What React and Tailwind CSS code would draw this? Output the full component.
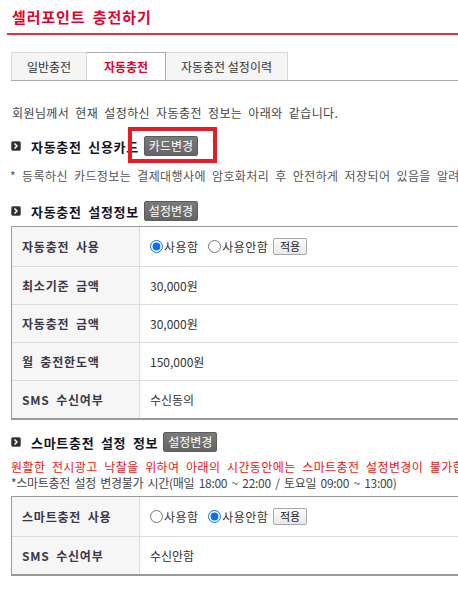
import React from "react";

function Bullet() {
  return (
    <svg width="10" height="10" viewBox="0 0 10 10" className="shrink-0">
      <rect x="0.5" y="0.5" width="9" height="9" rx="1.5" fill="#2e2e2e" stroke="#6a6a6a" />
      <polyline points="3.5,2.5 6,5 3.5,7.5" fill="none" stroke="#fff" strokeWidth="1.5" />
    </svg>
  );
}

function GrayBtn({ children }) {
  return (
    <div className="ml-[5px] h-[20px] w-[54px] flex items-center justify-center rounded-[2px] border border-[#5c5c5c] bg-[linear-gradient(#7a7a7a,#656565)] text-white text-[12px] leading-none">
      {children}
    </div>
  );
}

function Heading({ title, btn }) {
  return (
    <div className="flex items-center h-[20px] pl-[11px]">
      <Bullet />
      <span className="ml-[10px] text-[13px] font-bold text-[#15151f] leading-none tracking-[0.7px] [word-spacing:3px]">
        {title}
      </span>
      <GrayBtn>{btn}</GrayBtn>
    </div>
  );
}

function Radio({ checked, label }) {
  return (
    <label className="flex items-center">
      <input
        type="radio"
        checked={checked}
        readOnly
        className="w-[13px] h-[13px] m-0 accent-[#0a6ff0]"
      />
      <span className="ml-px text-[12px] text-[#333] tracking-[0.4px]">{label}</span>
    </label>
  );
}

function ApplyBtn() {
  return (
    <div className="ml-[5px] h-[17px] w-[34px] flex items-center justify-center rounded-[2px] border border-[#a8a8a8] bg-[linear-gradient(#fdfdfd,#e8e8e8)] text-[11px] text-[#222] leading-none">
      적용
    </div>
  );
}

function Row({ label, children, h, last }) {
  return (
    <div className={`flex ${last ? "" : "border-b border-[#dcdcdc]"}`} style={{ height: h }}>
      <div className="w-[128px] shrink-0 bg-[#f6f6f6] border-r border-[#dcdcdc] flex items-center pl-[10px] text-[12px] font-bold text-[#383848] tracking-[0.8px] [word-spacing:3px]">
        {label}
      </div>
      <div className="flex items-center pl-[10px] text-[12px] text-[#333]">{children}</div>
    </div>
  );
}

function UseRow({ on }) {
  return (
    <div className="flex items-center">
      <Radio checked={on} label="사용함" />
      <div className="w-[10px]" />
      <Radio checked={!on} label="사용안함" />
      <ApplyBtn />
    </div>
  );
}

export default function App() {
  return (
    <div className="relative w-[458px] h-[590px] overflow-hidden bg-white font-['Noto_Sans_CJK_KR',sans-serif] text-[#333]">
      <div className="h-[33px] pl-[12px] pt-[6px] text-[15px] font-bold text-[#e4002b] leading-[22px] tracking-[0.9px] [word-spacing:3px]">
        셀러포인트 충전하기
      </div>
      <div className="ml-[7px] h-[2px] bg-[#e3323b]" />

      <div className="mt-[17px] ml-[11px] flex items-end h-[29px] border-b border-[#aaa]">
        <div className="w-[76px] h-[28px] border border-b-0 border-[#d8d8d8] bg-[#f5f5f5] flex items-center justify-center text-[12px] text-[#333]">
          일반충전
        </div>
        <div className="w-[79px] h-[28px] border border-b-0 border-l-0 border-[#aaa] bg-white flex items-center justify-center text-[12px] font-bold text-[#e4002b]">
          자동충전
        </div>
        <div className="w-[122px] h-[28px] border border-b-0 border-l-0 border-[#d8d8d8] bg-[#f5f5f5] flex items-center justify-center text-[12px] text-[#333]">
          자동충전 설정이력
        </div>
      </div>

      <div className="mt-[24px] h-[16px] pl-[12px] text-[12px] leading-[16px] text-[#444] whitespace-nowrap tracking-[0.4px] [word-spacing:3px]">
        회원님께서 현재 설정하신 자동충전 정보는 아래와 같습니다.
      </div>

      <div className="mt-[15px]">
        <Heading title="자동충전 신용카드" btn="카드변경" />
      </div>

      <div className="mt-[12px] h-[16px] pl-[10px] text-[12px] leading-[16px] text-[#555] whitespace-nowrap tracking-[0.4px] [word-spacing:3px]">
        * 등록하신 카드정보는 결제대행사에 암호화처리 후 안전하게 저장되어 있음을 알려드립니다.
      </div>

      <div className="mt-[17px]">
        <Heading title="자동충전 설정정보" btn="설정변경" />
      </div>

      <div className="mt-[5px] ml-[11px] w-[480px] border-t border-l border-b-2 border-[#9a9a9a]">
        <Row label="자동충전 사용" h={40}>
          <UseRow on={true} />
        </Row>
        <Row label="최소기준 금액" h={38}>30,000원</Row>
        <Row label="자동충전 금액" h={38}>30,000원</Row>
        <Row label="월 충전한도액" h={38}>150,000원</Row>
        <Row label="SMS 수신여부" h={37} last>수신동의</Row>
      </div>

      <div className="mt-[12px]">
        <Heading title="스마트충전 설정 정보" btn="설정변경" />
      </div>

      <div className="mt-[7px] h-[16px] pl-[11px] text-[12px] leading-[16px] text-[#ee1111] whitespace-nowrap tracking-[0.4px] [word-spacing:3.5px]">
        원활한 전시광고 낙찰을 위하여 아래의 시간동안에는 스마트충전 설정변경이 불가합니다.
      </div>
      <div className="h-[16px] pl-[11px] text-[12px] leading-[16px] text-[#444] whitespace-nowrap [word-spacing:2px] tracking-[-0.3px]">
        *스마트충전 설정 변경불가 시간(매일 18:00 ~ 22:00 / 토요일 09:00 ~ 13:00)
      </div>

      <div className="mt-[5px] ml-[11px] w-[480px] border-t border-l border-b-2 border-[#9a9a9a]">
        <Row label="스마트충전 사용" h={40}>
          <UseRow on={false} />
        </Row>
        <Row label="SMS 수신여부" h={37} last>수신안함</Row>
      </div>

      <div className="absolute left-[128px] top-[127px] w-[89px] h-[36px] border-[4px] border-[#e81c24]" />
    </div>
  );
}
